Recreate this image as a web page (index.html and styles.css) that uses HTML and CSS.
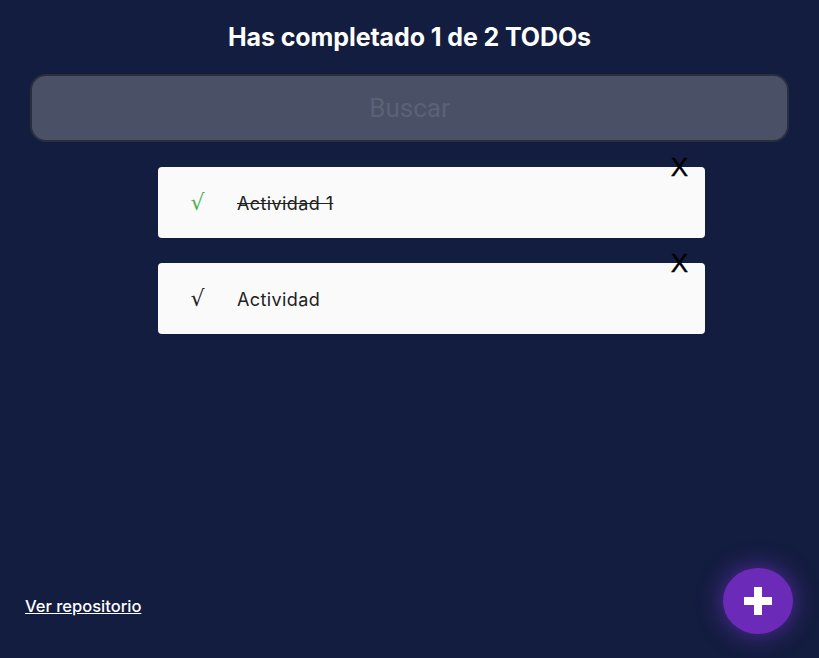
FILE: index.html
```html
<!DOCTYPE html>
<html lang="es">
<head>
<meta charset="utf-8">
<title>TODOs</title>
<link rel="stylesheet" href="styles.css">
</head>
<body>
<main class="app">
  <h1 class="title">Has completado 1 de 2 TODOs</h1>
  <div class="search-wrap">
    <input class="search" type="text" placeholder="Buscar">
  </div>
  <ul class="list">
    <li class="item">
      <span class="check done">√</span>
      <p class="text text-done">Actividad 1</p>
      <span class="delete">X</span>
    </li>
    <li class="item">
      <span class="check">√</span>
      <p class="text">Actividad</p>
      <span class="delete">X</span>
    </li>
  </ul>
  <footer class="footer">
    <a class="repo" href="#">Ver repositorio</a>
    <button class="fab" type="button" aria-label="Agregar">
      <svg width="30" height="30" viewBox="0 0 30 30"><path d="M11 1h8v10h10v8H19v10h-8V19H1v-8h10z" fill="#fff"/></svg>
    </button>
  </footer>
</main>
</body>
</html>
```

FILE: styles.css
```css
html, body {
  margin: 0;
  padding: 0;
  height: 100%;
}
body {
  background: #131d3f;
  font-family: Inter, "Noto Sans", sans-serif;
}
.app {
  height: 100%;
  display: flex;
  flex-direction: column;
}
.title {
  margin: 0;
  padding-top: 22px;
  text-align: center;
  color: #ffffff;
  font-size: 25px;
  line-height: 30px;
  font-weight: 700;
  letter-spacing: -0.1px;
}
.search-wrap {
  padding: 22px 30px 0 30px;
}
.search {
  box-sizing: border-box;
  width: 100%;
  height: 68px;
  border: 2px solid #2b2f3d;
  border-radius: 16px;
  background: #4a5066;
  text-align: center;
  font-family: Roboto, "Noto Sans", sans-serif;
  font-size: 26px;
  color: #5c6275;
  outline: none;
}
.search::placeholder {
  color: #5c6275;
}
.list {
  list-style: none;
  margin: 25px 0 0 158px;
  padding: 0;
  width: 547px;
  display: flex;
  flex-direction: column;
  gap: 25px;
}
.item {
  position: relative;
  height: 71px;
  background: #fafafa;
  border-radius: 4px;
  display: flex;
  align-items: center;
}
.check {
  width: 79px;
  text-align: center;
  font-family: "DejaVu Sans", sans-serif;
  font-size: 22px;
  color: #222;
}
.check.done {
  color: #4caf50;
}
.text {
  margin: 2px 0 0 0;
  font-size: 18px;
  color: #222;
  letter-spacing: 0.4px;
}
.text-done {
  text-decoration: line-through;
}
.delete {
  position: absolute;
  top: -12px;
  right: 17px;
  font-family: "Liberation Sans", Arial, sans-serif;
  font-size: 26px;
  font-weight: 400;
  line-height: 24px;
  color: #000;
  -webkit-text-stroke: 0.4px #000;
}
.footer {
  margin-top: auto;
  display: flex;
  align-items: center;
  justify-content: space-between;
  padding: 0 26px 24px 25px;
}
.repo {
  margin-top: 10px;
  color: #ffffff;
  font-size: 16.5px;
  font-weight: 500;
  text-decoration: underline;
}
.fab {
  width: 70px;
  height: 66px;
  border: none;
  border-radius: 50%;
  background: #6b2bb8;
  box-shadow: 0 0 24px rgba(120, 50, 210, 0.7);
  display: flex;
  align-items: center;
  justify-content: center;
  padding: 0;
}
```
